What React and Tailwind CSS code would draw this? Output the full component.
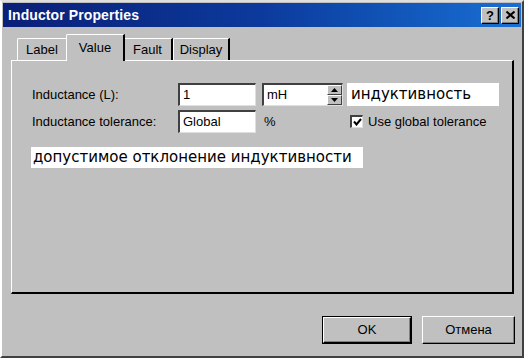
import React from 'react';

function TitleButton({ children }) {
  return (
    <div className="w-[18px] h-[17px] bg-[#c0c0c0] border border-t-white border-l-white border-r-black border-b-black flex items-center justify-center text-black font-bold text-[13px] leading-none shadow-[inset_-1px_-1px_0_#808080]">
      {children}
    </div>
  );
}

function Tab({ label, active, width }) {
  if (active) {
    return (
      <div
        className="relative z-10 -mx-[2px] h-[27px] -mb-px bg-[#c0c0c0] border-t border-l border-white border-r-2 border-r-black rounded-tl-[2px] flex items-start justify-center pt-[3px] text-[13px]"
        style={{ width }}
      >
        {label}
      </div>
    );
  }
  return (
    <div
      className="h-[23px] mt-[4px] bg-[#c0c0c0] border-t border-l border-white border-r-2 border-r-black rounded-tl-[2px] flex items-center justify-center text-[13px]"
      style={{ width }}
    >
      {label}
    </div>
  );
}

function Field({ value, width }) {
  return (
    <div
      className="h-[23px] bg-white border-t-2 border-l-2 border-t-[#404040] border-l-[#404040] border-b border-r border-b-[#dfdfdf] border-r-[#dfdfdf] flex items-center pl-[3px] text-[13px]"
      style={{ width }}
    >
      {value}
    </div>
  );
}

function Spinner() {
  return (
    <div className="w-[15px] h-full flex flex-col">
      <div className="flex-1 bg-[#c0c0c0] border border-t-white border-l-white border-r-[#404040] border-b-[#404040] flex items-center justify-center">
        <svg width="7" height="4" viewBox="0 0 7 4"><polygon points="3.5,0 7,4 0,4" fill="#000" /></svg>
      </div>
      <div className="flex-1 bg-[#c0c0c0] border border-t-white border-l-white border-r-[#404040] border-b-[#404040] flex items-center justify-center">
        <svg width="7" height="4" viewBox="0 0 7 4"><polygon points="0,0 7,0 3.5,4" fill="#000" /></svg>
      </div>
    </div>
  );
}

export default function App() {
  return (
    <div
      className="w-[524px] h-[358px] bg-[#c0c0c0] text-black border-t-2 border-l-2 border-t-[#dfdfdf] border-l-white border-r-2 border-b-2 border-r-[#404040] border-b-[#404040] flex flex-col pt-px px-px"
      style={{ fontFamily: '"Liberation Sans", Arial, sans-serif' }}
    >
      {/* title bar */}
      <div className="h-[24px] bg-gradient-to-r from-[#0a1f78] via-[#0c3a9c] to-[#1a6fd4] flex items-center justify-between pl-[5px] pr-[2px]">
        <span className="text-white font-bold text-[14px] tracking-[0.1px]">Inductor Properties</span>
        <div className="flex gap-[2px]">
          <TitleButton>?</TitleButton>
          <TitleButton>
            <svg width="9" height="8" viewBox="0 0 9 8">
              <path d="M0.5 0.5 L8.5 7.5 M8.5 0.5 L0.5 7.5" stroke="#000" strokeWidth="2" />
            </svg>
          </TitleButton>
        </div>
      </div>

      {/* tabs */}
      <div className="flex items-start pl-[11px] mt-[7px] h-[26px]">
        <div className="pl-[3px] flex items-start">
          <Tab label="Label" width={51} />
          <Tab label="Value" active width={59} />
          <Tab label="Fault" width={50} />
          <Tab label="Display" width={57} />
        </div>
      </div>

      {/* panel */}
      <div className="ml-[8px] w-[503px] h-[234px] border-t border-l border-white border-r-2 border-b-2 border-r-black border-b-black pt-[22px] pl-[20px]">
        <div className="flex items-center h-[23px]">
          <span className="w-[146px] text-[13px]">Inductance (L):</span>
          <Field value="1" width={78} />
          <div className="ml-[6px] w-[81px] h-[23px] bg-white border-t-2 border-l-2 border-t-[#404040] border-l-[#404040] border-b border-r border-b-[#dfdfdf] border-r-[#dfdfdf] flex items-stretch">
            <span className="flex-1 flex items-center pl-[3px] text-[13px]">mH</span>
            <Spinner />
          </div>
          <div
            className="ml-[4px] w-[152px] h-[23px] bg-white flex items-center pl-[4px] text-[15px]"
            style={{ fontFamily: '"DejaVu Sans", sans-serif' }}
          >
            индуктивность
          </div>
        </div>

        <div className="flex items-center h-[23px] mt-[4px]">
          <span className="w-[146px] text-[13px]">Inductance tolerance:</span>
          <Field value="Global" width={78} />
          <span className="ml-[8px] w-[86px] text-[13px]">%</span>
          <div className="w-[13px] h-[13px] bg-white border-t-2 border-l-2 border-t-[#404040] border-l-[#404040] border-b border-r border-b-[#dfdfdf] border-r-[#dfdfdf] flex items-center justify-center">
            <svg width="9" height="8" viewBox="0 0 9 8">
              <path d="M1 3.5 L3.5 6.5 L8 1" stroke="#000" strokeWidth="2" fill="none" />
            </svg>
          </div>
          <span className="ml-[5px] text-[13px]">Use global tolerance</span>
        </div>

        <div
          className="mt-[14px] -ml-[1px] w-[332px] h-[21px] bg-white flex items-center pl-[2px] text-[15px]"
          style={{ fontFamily: '"DejaVu Sans", sans-serif' }}
        >
          допустимое отклонение индуктивности
        </div>
      </div>

      {/* buttons */}
      <div className="flex justify-end gap-[10px] pr-[6px] mt-[22px]">
        <div className="w-[90px] h-[28px] border border-black">
          <div className="w-full h-full bg-[#c0c0c0] border border-t-white border-l-white border-r-black border-b-black shadow-[inset_-1px_-1px_0_#808080] flex items-center justify-center text-[13px]">
            OK
          </div>
        </div>
        <div className="w-[93px] h-[28px] bg-[#c0c0c0] border border-t-white border-l-white border-r-black border-b-black shadow-[inset_-1px_-1px_0_#808080] flex items-center justify-center text-[13px]">
          Отмена
        </div>
      </div>
    </div>
  );
}
